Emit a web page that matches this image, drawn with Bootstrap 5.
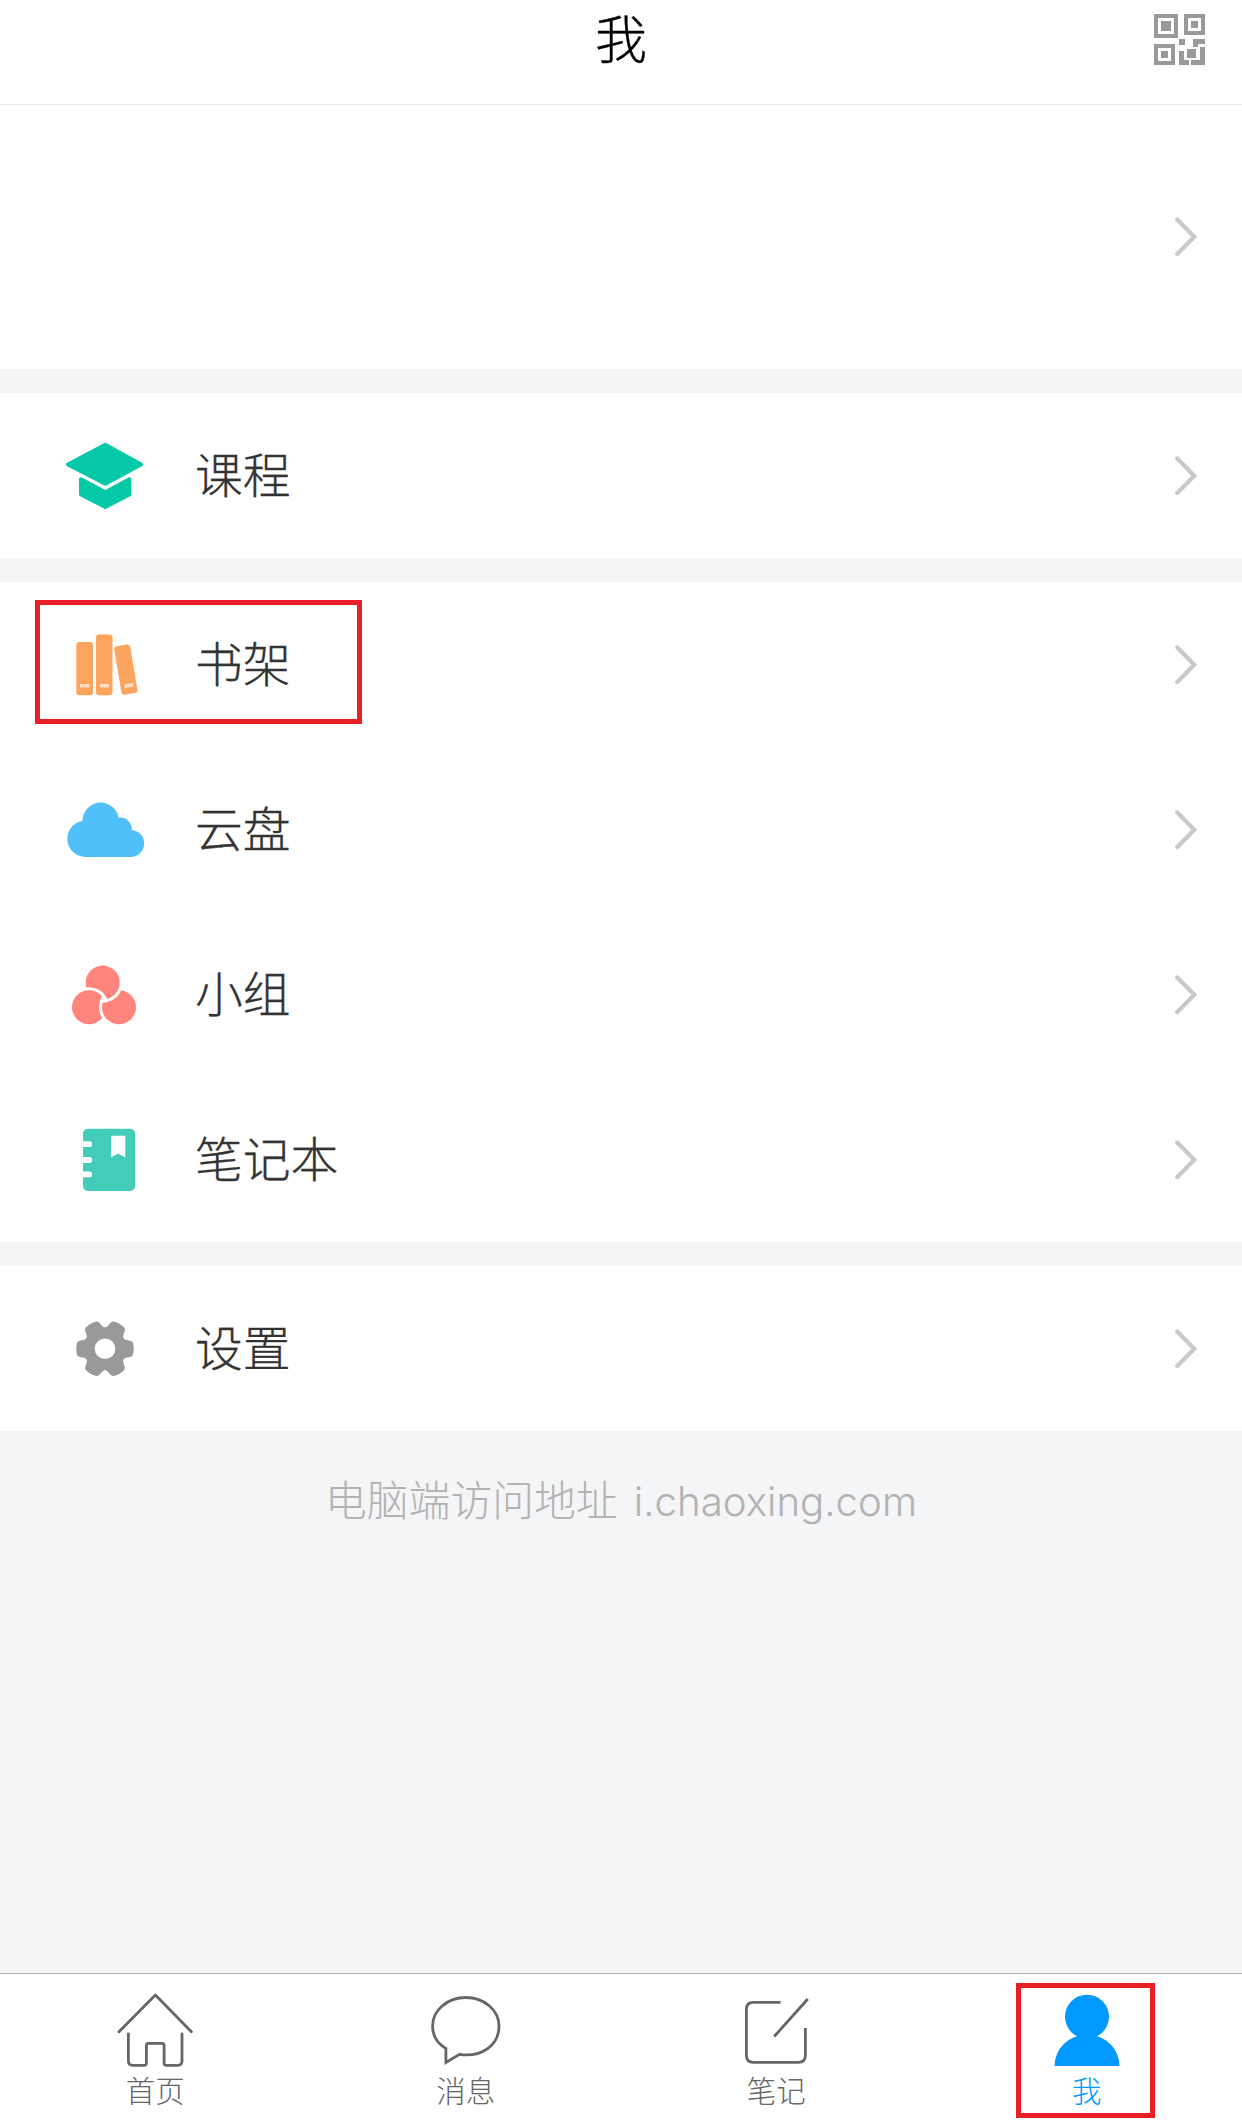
<!DOCTYPE html>
<html lang="zh-CN">
<head>
<meta charset="utf-8">
<meta name="viewport" content="width=device-width, initial-scale=1">
<title>我</title>
<link href="https://cdn.jsdelivr.net/npm/bootstrap@5.3.0/dist/css/bootstrap.min.css" rel="stylesheet">
<style>
body{font-family:"Noto Sans CJK SC",sans-serif;font-weight:300;background:#f4f5f7;color:#333;height:2120px;overflow:hidden}
svg{display:block;flex:none}
.top-bar{height:105px;border-bottom:1px solid #e9e9e9;padding:14px 37px 0 0}
.top-title{font-size:52px;line-height:52px;color:#000;left:0;right:0;top:11px;-webkit-text-stroke:.3px}
.profile-row{height:264px}
.menu-row{height:165px;padding-left:60px}
.profile-row,.menu-row{padding-right:45px}
.menu-block{margin-top:24px}
.menu-label{font-size:47.8px;line-height:60px;margin-left:45px;padding-bottom:5px;-webkit-text-stroke:.3px}
.hint{font-size:41.8px;line-height:60px;color:#b2b2b2;margin-top:37px}
.hint-url{font-family:Inter,"Noto Sans",sans-serif;font-size:40.2px;margin-left:7px}
.tab-bar{height:147px;border-top:1px solid #a9adb1}
.tab-item{color:#666;font-size:29.5px;line-height:36px;padding-top:11px;text-decoration:none}
.tab-item span{padding-top:2px}
.tab-item.active{color:#09f}
.frame{border:5px solid #e81f27;pointer-events:none}
.frame-shelf{left:35px;top:18px;width:327px;height:124px}
.frame-me{left:1016px;top:9px;width:139px;height:135px}
.line{fill:none;stroke:#666;stroke-width:2.8;stroke-linecap:round;stroke-linejoin:round}
</style>
<script src="https://cdn.jsdelivr.net/npm/bootstrap@5.3.0/dist/js/bootstrap.bundle.min.js"></script>
</head>
<body class="d-flex flex-column">
<svg width="0" height="0" class="position-absolute"><defs>
<symbol id="chev" viewBox="0 0 24 42"><path d="M4.3 3.5 21.3 20.7 4.3 38" fill="none" stroke="#c9c9c9" stroke-width="4.2" stroke-linecap="round"/></symbol>
</defs></svg>

<header class="top-bar bg-white d-flex justify-content-end position-relative">
  <div class="top-title position-absolute text-center">我</div>
  <svg width="51" height="51" fill="#999" shape-rendering="crispEdges"><path fill-rule="evenodd" d="M0 0h24v24H0zM4 4v16h16V4zM7 7h10v10H7zM30 0h21v21H30zM34 4v13h13V4zM37 7h7v7h-7zM0 30h21v21H0zM4 34v13h13V34zM7 37h7v7H7zM25 25h6v6h-6zM39 25h12v5h-7v3h-5zM33 35h9v9h-9zM25 37h5v9h5v5H25zM46 33h5v18H37v-5h9z"/></svg>
</header>

<main class="flex-grow-1">
  <section class="profile-row bg-white d-flex align-items-center justify-content-end"><svg width="24" height="42"><use href="#chev"/></svg></section>

  <section class="menu-block bg-white">
    <div class="menu-row d-flex align-items-center">
      <svg width="90" height="90" fill="#05c8a7" stroke="#05c8a7" stroke-linejoin="round"><path stroke-width="4" d="M45.3 13.8 81 33.5 45.3 52.7 8 33.5z"/><path stroke-width="4" d="M21 48.3 45.3 61.2 69.3 48.3V63.5L45.3 76 21 63.5z"/></svg>
      <span class="menu-label">课程</span><svg class="ms-auto" width="24" height="42"><use href="#chev"/></svg>
    </div>
  </section>

  <section class="menu-block bg-white">
    <div class="menu-row d-flex align-items-center position-relative">
      <svg width="90" height="90" fill="#fda55e"><rect x="16.3" y="22" width="16.7" height="53.2" rx="3"/><rect x="36" y="14.5" width="16.5" height="60.7" rx="3"/><rect x="57.7" y="25" width="16.2" height="49.3" rx="3" transform="rotate(-9.5 65.8 49.6)"/><g fill="#fee0c6"><path d="M20.2 64h9v3.5h-9zM40 64h9v3.5h-9z"/><path d="M64.2 64.6 73 63.1 73.5 66.6 64.7 68.1z"/></g></svg>
      <span class="menu-label">书架</span><svg class="ms-auto" width="24" height="42"><use href="#chev"/></svg>
      <div class="frame frame-shelf position-absolute"></div>
    </div>
    <div class="menu-row d-flex align-items-center">
      <svg width="90" height="90" fill="#50bffa"><circle cx="25.4" cy="53.8" r="18.1"/><circle cx="40.7" cy="35.8" r="18.2"/><circle cx="60.2" cy="44.2" r="11.6"/><circle cx="70.6" cy="58.4" r="13.5"/><path d="M25 40h35l11 10v21.9H25z"/></svg>
      <span class="menu-label">云盘</span><svg class="ms-auto" width="24" height="42"><use href="#chev"/></svg>
    </div>
    <div class="menu-row d-flex align-items-center">
      <svg width="90" height="90" fill="#ff857c"><defs>
        <mask id="cutLeft"><path fill="#fff" d="M0 0h90v90H0z"/><circle cx="29" cy="57.2" r="20" fill="#000"/></mask>
        <mask id="cutTop"><path fill="#fff" d="M0 0h90v90H0z"/><circle cx="42.7" cy="32.6" r="20" fill="#000"/></mask>
        <mask id="cutRight"><path fill="#fff" d="M0 0h90v90H0z"/><circle cx="59" cy="57.2" r="20" fill="#000"/></mask></defs>
        <circle cx="42.7" cy="32.6" r="17" mask="url(#cutLeft)"/><circle cx="59" cy="57.2" r="17" mask="url(#cutTop)"/><circle cx="29" cy="57.2" r="17" mask="url(#cutRight)"/></svg>
      <span class="menu-label">小组</span><svg class="ms-auto" width="24" height="42"><use href="#chev"/></svg>
    </div>
    <div class="menu-row d-flex align-items-center">
      <svg width="90" height="90"><rect x="23" y="13.8" width="52" height="62.2" rx="5" fill="#43cdb9"/><path d="M22 29.2h7.2M22 45h7.2M22 59.4h7.2" stroke="#fff" stroke-width="5.8" stroke-linecap="round"/><path d="M51 20.8h14.3v21.7l-7.2-4-7.1 4z" fill="#fff"/></svg>
      <span class="menu-label">笔记本</span><svg class="ms-auto" width="24" height="42"><use href="#chev"/></svg>
    </div>
  </section>

  <section class="menu-block bg-white">
    <div class="menu-row d-flex align-items-center">
      <svg width="90" height="90" fill="#999"><defs><path id="tooth" d="M15 -14.5Q17 -9 24 -8.4Q27.2 -8.2 28 -6Q29.8 0 28 6Q27.2 8.2 24 8.4Q17 9 15 14.5Z"/></defs>
      <g transform="translate(45 44.8)"><circle r="21.5"/><use href="#tooth"/><use href="#tooth" transform="rotate(60)"/><use href="#tooth" transform="rotate(120)"/><use href="#tooth" transform="rotate(180)"/><use href="#tooth" transform="rotate(240)"/><use href="#tooth" transform="rotate(300)"/><circle r="10.3" fill="#fff"/></g></svg>
      <span class="menu-label">设置</span><svg class="ms-auto" width="24" height="42"><use href="#chev"/></svg>
    </div>
  </section>

  <p class="hint text-center mb-0">电脑端访问地址 <span class="hint-url">i.chaoxing.com</span></p>
</main>

<nav class="tab-bar bg-white position-relative">
  <div class="row g-0 text-center">
    <a class="tab-item col d-flex flex-column align-items-center"><svg width="80" height="84" class="line"><path d="M4 46.7 40.4 10 76.4 46.7M13.4 48.8V76q0 4.3 4.3 4.3H29.4q2 0 2-2V60.3q0-2 2-2H47.1q2 0 2 2V78.3q0 2 2 2H62.7q4.3 0 4.3-4.3V48.8"/></svg><span>首页</span></a>
    <a class="tab-item col d-flex flex-column align-items-center"><svg width="80" height="84" class="line"><path style="stroke-linejoin:miter" d="M19.9 63.5V77.5L33.4 69.4C56 72.7 73 60 73 41.2C73 25 58 12.5 39.8 12.5S6.6 25 6.6 41.2C6.6 50.5 11.5 58.5 19.9 63.5z"/></svg><span>消息</span></a>
    <a class="tab-item col d-flex flex-column align-items-center"><svg width="80" height="84" class="line" style="stroke-linecap:butt"><path d="M44.6 17.3H17.4q-7 0-7 7V70.3q0 7 7 7H62.4q7 0 7-7V43M38.2 51.5 71.8 14"/></svg><span>笔记</span></a>
    <a class="tab-item active col d-flex flex-column align-items-center"><svg width="80" height="84" fill="#09f"><circle cx="40" cy="31.7" r="22"/><path d="M7.5 81A32.5 31.5 0 0 1 72.5 81z"/></svg><span>我</span></a>
  </div>
  <div class="frame frame-me position-absolute"></div>
</nav>
</body>
</html>
